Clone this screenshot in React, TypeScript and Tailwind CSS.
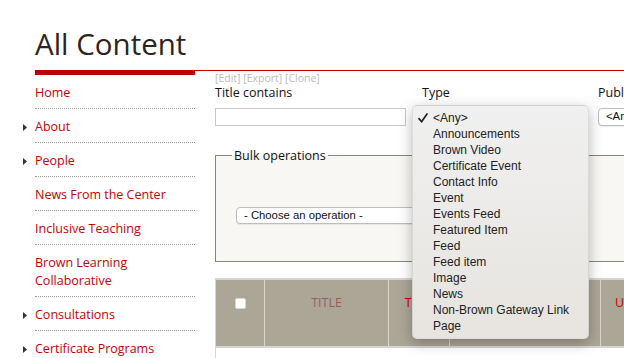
const NAV: { label: string; arrow?: boolean }[] = [
  { label: "Home" },
  { label: "About", arrow: true },
  { label: "People", arrow: true },
  { label: "News From the Center" },
  { label: "Inclusive Teaching" },
  { label: "Brown Learning Collaborative" },
  { label: "Consultations", arrow: true },
  { label: "Certificate Programs", arrow: true },
];

const TYPES = [
  "<Any>",
  "Announcements",
  "Brown Video",
  "Certificate Event",
  "Contact Info",
  "Event",
  "Events Feed",
  "Featured Item",
  "Feed",
  "Feed item",
  "Image",
  "News",
  "Non-Brown Gateway Link",
  "Page",
];

function Sidebar() {
  return (
    <nav className="w-[160px] shrink-0 border-t-[5px] border-[#c00000]">
      {NAV.map((item) => (
        <div
          key={item.label}
          className="flex items-center border-b border-dotted border-[#9a9a9a] pt-[9px] pb-[6px]"
        >
          <span className="-ml-[12px] w-[12px] shrink-0">
            {item.arrow && (
              <svg width="4" height="7" viewBox="0 0 4 7" className="block">
                <path d="M0 0L4 3.5L0 7Z" fill="#333" />
              </svg>
            )}
          </span>
          <a className="text-[12.5px] leading-[18px] text-[#c00404]">{item.label}</a>
        </div>
      ))}
    </nav>
  );
}

function FakeSelect({ text, className }: { text: string; className: string }) {
  return (
    <div
      className={
        "h-[17px] rounded-[4px] border border-[#bdbdbd] bg-white pl-[7px] font-['Liberation_Sans'] text-[11.3px] leading-[15px] text-[#111] shadow-[0_1px_1px_rgba(0,0,0,0.08)] " +
        className
      }
    >
      {text}
    </div>
  );
}

function TypeMenu() {
  return (
    <div className="absolute left-[412px] top-[105px] w-[177px] rounded-[5px] border border-[rgba(0,0,0,0.08)] bg-gradient-to-b from-[#f0f0f0] to-[#e7e4df] pt-[4px] pb-[4px] shadow-[0_4px_14px_rgba(0,0,0,0.28)] font-['Liberation_Sans'] text-[12px] leading-[16px] text-[#222]">
      {TYPES.map((t, i) => (
        <div key={t} className="relative pl-[20px]">
          {i === 0 && (
            <svg
              width="10"
              height="10"
              viewBox="0 0 10 10"
              className="absolute left-[5px] top-[3px]"
            >
              <path
                d="M1 5.6L3.6 8.8L9 1"
                fill="none"
                stroke="#222"
                strokeWidth="1.7"
                strokeLinecap="round"
                strokeLinejoin="round"
              />
            </svg>
          )}
          {t}
        </div>
      ))}
    </div>
  );
}

function ResultsHead() {
  return (
    <div className="mt-[16px] w-[520px] border-l border-[#d6d6d6]">
      <div className="flex h-[70px] border-y-2 border-[#d5d5d5] bg-[#aca697] pt-[15px] text-[12.5px] leading-[16px] uppercase">
        <div className="flex h-[16px] w-[48px] items-center justify-center">
          <span className="block h-[11px] w-[11px] rounded-[2px] border border-[#d8d8d8] bg-white" />
        </div>
        <div className="-mt-[15px] w-[124px] border-l border-[#d9d6ce] pt-[15px] text-center text-[#995e5c]">
          Title
        </div>
        <div className="-mt-[15px] w-[61px] border-l border-[#d9d6ce] pt-[15px] text-center text-[#cc0000]">
          Type
        </div>
        <div className="-mt-[15px] w-[151px] border-l border-[#d9d6ce]" />
        <div className="-mt-[15px] flex-1 border-l border-[#d9d6ce] pt-[15px] pl-[14px] text-[#cc0000]">
          Updated
        </div>
      </div>
      <div className="h-[20px] bg-white" />
    </div>
  );
}

export default function App() {
  return (
    <div className="relative h-[358px] w-[624px] overflow-hidden bg-white font-['Open_Sans',sans-serif] text-[#111]">
      <h1 className="mt-[24px] pl-[35px] text-[29.5px] leading-[40px] text-[#2a2522]">All Content</h1>
      <div className="mt-[6px] flex pl-[35px]">
        <Sidebar />
        <main className="w-[600px] shrink-0 border-t border-[#c00000] pl-[20px]">
          <div className="text-[10.5px] leading-[14px] text-[#bdbdbd]">[Edit] [Export] [Clone]</div>
          <div className="flex text-[12.5px] leading-[16px]">
            <div className="w-[191px]">
              <div>Title contains</div>
              <input
                type="text"
                className="mt-[7px] block h-[18px] w-[191px] border border-[#c8c8c8] bg-white"
              />
            </div>
            <div className="ml-[16px] w-[160px]">
              <div>Type</div>
            </div>
            <div className="ml-[16px] w-[120px]">
              <div className="whitespace-nowrap">Published</div>
              <FakeSelect text="<Any>" className="mt-[7px] w-[80px] h-[18px]" />
            </div>
          </div>
          <fieldset className="mt-[21px] w-[520px] border border-[#8b8374] bg-[#f8f7f3] pt-[43px] pb-[37px] pl-[20px]">
            <legend className="-ml-[4px] px-[2px] text-[12.5px] leading-[17px] text-[#111]">
              Bulk operations
            </legend>
            <FakeSelect text="- Choose an operation -" className="w-[220px]" />
          </fieldset>
          <ResultsHead />
        </main>
      </div>
      <TypeMenu />
    </div>
  );
}
